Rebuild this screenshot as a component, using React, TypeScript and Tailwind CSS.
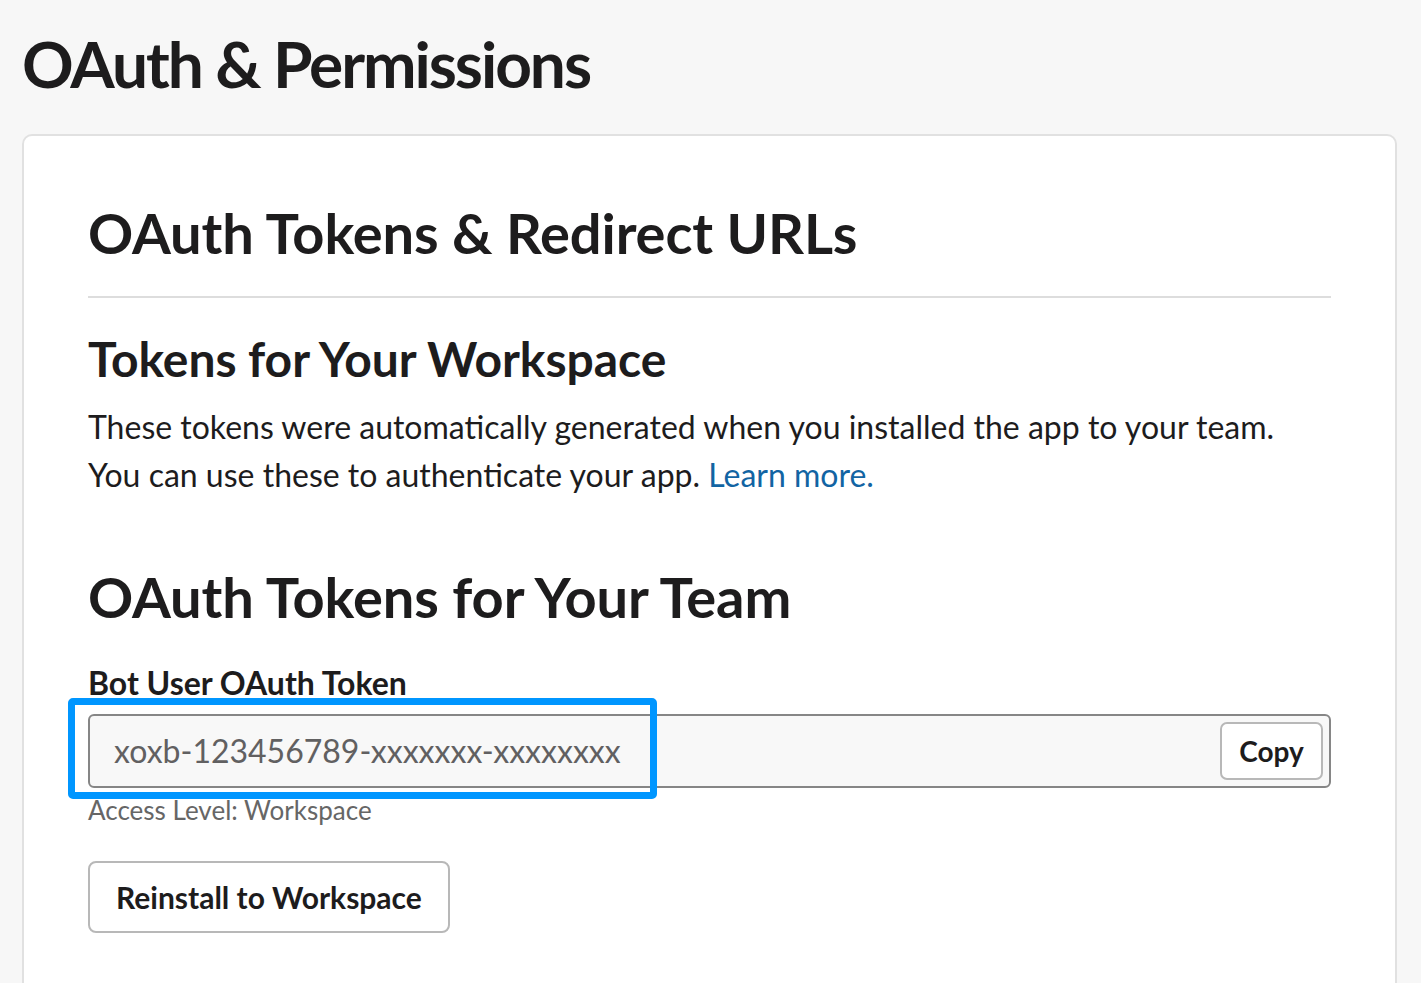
import React from "react";

export default function App() {
  return (
    <div
      className="min-h-screen bg-[#f7f7f7] text-[#1d1c1d] pt-[26px] pl-[22px] pr-[24px]"
      style={{ fontFamily: "Lato, 'Noto Sans', sans-serif" }}
    >
      <h1 className="text-[64px] leading-[76px] font-bold tracking-[-2.05px]">OAuth &amp; Permissions</h1>
      <div className="mt-[32px] bg-white border-2 border-[#e1e1e1] rounded-[10px] px-[64px] pt-[63px] pb-[60px]">
        <h2 className="text-[56px] leading-[67px] font-bold tracking-[-0.1px]">OAuth Tokens &amp; Redirect URLs</h2>
        <div className="mt-[30px] h-[2px] bg-[#dddddd]" />
        <h3 className="mt-[32px] text-[48px] leading-[57px] font-bold tracking-[-0.05px]">Tokens for Your Workspace</h3>
        <p className="mt-[16px] text-[32px] leading-[48px]">
          These tokens were automatically generated when you installed the app to your team.
          <br />
          You can use these to authenticate your app. <span className="text-[#1264a3]">Learn more.</span>
        </p>
        <h2 className="mt-[64px] text-[56px] leading-[67px] font-bold tracking-[-0.08px]">OAuth Tokens for Your Team</h2>
        <div className="mt-[34px] text-[32px] leading-[38px] font-bold">Bot User OAuth Token</div>
        <div className="relative mt-[12px]">
          <div className="flex items-center justify-between h-[74px] border-2 border-[#868686] rounded-[6px] bg-[#f8f8f8] pl-[24px] pr-[6px]">
            <span className="text-[32px] text-[#616061]">xoxb-123456789-xxxxxxx-xxxxxxxx</span>
            <button className="h-[58px] w-[103px] border-2 border-[#b8b8b8] rounded-[7px] bg-white text-[28px] font-bold text-[#1d1c1d]">
              Copy
            </button>
          </div>
          <div className="absolute left-[-20px] top-[-16px] w-[589px] h-[101px] border-[7px] border-[#0096ff] rounded-[5px] pointer-events-none" />
        </div>
        <div className="mt-[5px] text-[26px] leading-[34px] text-[#666666]">Access Level: Workspace</div>
        <button className="mt-[34px] h-[72px] px-[26px] border-2 border-[#b8b8b8] rounded-[8px] bg-white text-[30px] font-bold text-[#1d1c1d]">
          Reinstall to Workspace
        </button>
      </div>
    </div>
  );
}
